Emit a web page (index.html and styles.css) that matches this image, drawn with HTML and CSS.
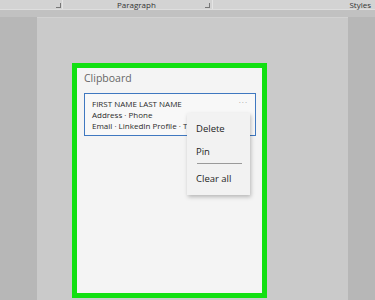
FILE: index.html
```html
<!DOCTYPE html>
<html lang="en">
<head>
    <meta charset="UTF-8">
    <meta name="viewport" content="width=device-width, initial-scale=1.0">
    <title>Clipboard</title>
    <link rel="stylesheet" href="styles.css">
</head>
<body>
    <!-- ribbon group labels along the top -->
    <div class="ribbon">
        <div class="group group-font">
            <span class="launcher"></span>
        </div>
        <div class="group group-paragraph">
            <span class="group-label">Paragraph</span>
            <span class="launcher"></span>
        </div>
        <div class="group group-styles">
            <span class="group-label">Styles</span>
        </div>
    </div>
    <div class="band"></div>

    <div class="workspace">
        <div class="page">
            <div class="frame">
                <div class="panel">
                    <div class="panel-title">Clipboard</div>
                    <div class="clip-card">
                        <div class="clip-line">FIRST NAME LAST NAME</div>
                        <div class="clip-line">Address · Phone</div>
                        <div class="clip-line">Email · LinkedIn Profile · Twitter</div>
                        <span class="more">···</span>
                    </div>

                    <!-- context menu opened from the card -->
                    <div class="menu">
                        <div class="menu-item">Delete</div>
                        <div class="menu-item">Pin</div>
                        <div class="menu-sep"></div>
                        <div class="menu-item">Clear all</div>
                    </div>
                </div>
            </div>
        </div>
    </div>
</body>
</html>
```

FILE: styles.css
```css
body {
    margin: 0;
    height: 300px;
    overflow: hidden;
    background-color: #b7b7b7;
    font-family: "Open Sans", "Noto Sans", Arial, sans-serif;
}
.ribbon {
    display: flex;
    height: 9px;
    background-color: #d3d3d3;
    border-bottom: 1px solid #dedede;
    font-size: 8px;
    line-height: 9px;
    color: #333;
}
.group {
    display: flex;
    align-items: center;
    border-right: 1px solid #e4e4e4;
}
.group-font {
    width: 63px;
    justify-content: flex-end;
    padding-right: 1px;
    box-sizing: border-box;
}
.group-paragraph {
    width: 150px;
    box-sizing: border-box;
    padding-left: 54px;
    padding-right: 2px;
    justify-content: space-between;
}
.group-styles {
    flex: 1;
    justify-content: flex-end;
    padding-right: 4px;
    border-right: none;
}
.launcher {
    width: 4px;
    height: 4px;
    border-right: 1px solid #777;
    border-bottom: 1px solid #777;
    margin-top: 1px;
}
.band {
    height: 7px;
    background-color: #c1c1c1;
}
.workspace {
    display: flex;
    padding-left: 37px;
    height: 283px;
}
.page {
    width: 311px;
    background-color: #cacaca;
    border-top: 1px solid #d2d2d2;
    box-sizing: border-box;
}
.frame {
    width: 195px;
    height: 235px;
    margin-top: 45px;
    margin-left: 35px;
    border: 5px solid #12e012;
    box-sizing: border-box;
}
.panel {
    position: relative;
    height: 100%;
    background-color: #f4f4f4;
    padding: 4px 6px 0 7px;
    box-sizing: border-box;
}
.panel-title {
    font-size: 10.5px;
    line-height: 12px;
    color: #666;
    margin-bottom: 9px;
}
.clip-card {
    position: relative;
    height: 43px;
    border: 1px solid #3f78c0;
    background-color: #f8f8f8;
    padding: 4px 6px 0 7px;
    box-sizing: border-box;
    font-size: 8px;
    line-height: 11px;
    color: #2a2a2a;
    white-space: nowrap;
}
.more {
    position: absolute;
    top: 2px;
    right: 7px;
    font-size: 8px;
    color: #999;
    letter-spacing: 1px;
}
.menu {
    position: absolute;
    left: 110px;
    top: 45px;
    width: 63px;
    height: 82px;
    background-color: #f2f2f2;
    box-shadow: 1px 2px 4px rgba(0, 0, 0, 0.25);
    padding: 9px 0 0 9px;
    box-sizing: border-box;
}
.menu-item {
    font-size: 9.5px;
    line-height: 13px;
    color: #1e1e1e;
    margin-bottom: 10px;
}
.menu-sep {
    width: 45px;
    height: 1px;
    background-color: #9a9a9a;
    margin: -5px 0 8px 1px;
}
```
